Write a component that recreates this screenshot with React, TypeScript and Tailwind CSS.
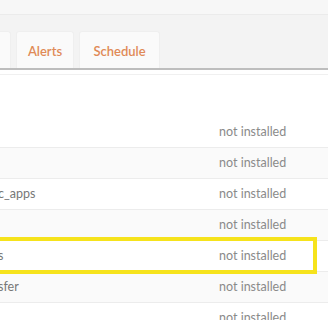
const ROWS = [
  { name: '', status: 'not installed' },
  { name: '', status: 'not installed' },
  { name: 'c_apps', status: 'not installed' },
  { name: '', status: 'not installed' },
  { name: 's', status: 'not installed', highlight: true },
  { name: 'sfer', status: 'not installed' },
  { name: '', status: 'not installed' },
];

function Tab({ label, className }: { label: string; className?: string }) {
  return (
    <div
      className={`flex h-[37px] items-center justify-center rounded-t-[3px] border border-b-0 border-[#efefef] bg-[#fafafa] pt-[3px] text-[13px] font-semibold text-[#e08a57] ${className ?? ''}`}
    >
      {label}
    </div>
  );
}

export default function App() {
  return (
    <div className="h-[320px] w-[328px] overflow-hidden bg-white font-['Lato','Liberation_Sans',sans-serif]">
      <div className="h-[15px] border-b border-[#ebebeb] bg-[#f7f7f7]" />
      <div className="flex h-[55px] items-end gap-[5px] border-b-2 border-[#bdbdbd] bg-[#f3f3f3]">
        <Tab label="" className="w-[11px] rounded-tl-none border-l-0" />
        <Tab label="Alerts" className="w-[58px]" />
        <Tab label="Schedule" className="w-[81px]" />
      </div>
      <div className="h-[5px] border-b border-[#f0f0f0]" />
      <div className="pt-[41px]">
        {ROWS.map((row, i) => (
          <div
            key={i}
            className={`relative flex h-[31px] items-center border-t pt-[1px] text-[12.5px] ${
              i === 0 ? 'border-transparent' : 'border-[#ececec]'
            } ${i % 2 === 1 ? 'bg-[#fafafa]' : 'bg-white'}`}
          >
            <div className="ml-[-2px] w-[221px] text-[#777]">{row.name}</div>
            <div className="text-[#8a8a8a]">{row.status}</div>
            {row.highlight && (
              <div className="absolute -top-[4px] -bottom-[3px] left-[-10px] right-[11px] z-10 border-4 border-[#f6e31c]" />
            )}
          </div>
        ))}
      </div>
    </div>
  );
}
